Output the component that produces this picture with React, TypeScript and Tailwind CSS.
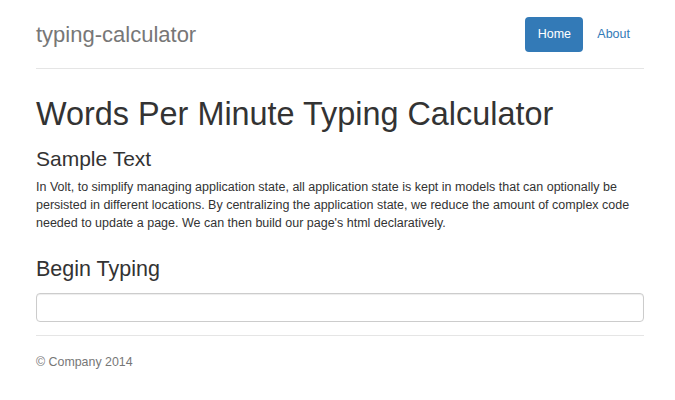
import React from "react";

export default function App() {
  return (
    <div className="min-h-[400px] bg-white pl-[36px] pr-[31px] text-[#333]" style={{ fontFamily: '"Liberation Sans", Arial, sans-serif' }}>
      <div className="flex items-center justify-between border-b border-[#e5e5e5] pt-[17px] pb-[16px]">
        <div className="text-[22px] leading-[26px] text-[#777]">typing-calculator</div>
        <div className="flex items-center mr-[14px]">
          <a className="flex h-[35px] w-[58px] items-center justify-center rounded-[4px] bg-[#337ab7] text-[12.5px] text-white">Home</a>
          <a className="ml-[14px] text-[12.5px] text-[#337ab7]">About</a>
        </div>
      </div>
      <h1 className="mt-[27px] text-[32.4px] leading-[36px]">Words Per Minute Typing Calculator</h1>
      <h3 className="mt-[15px] text-[21px] leading-[24px]">Sample Text</h3>
      <p className="mt-[7px] text-[12.5px] leading-[18px]">
        In Volt, to simplify managing application state, all application state is kept in models that can optionally be persisted in different locations. By centralizing the application state, we reduce the amount of complex code needed to update a page. We can then build our page's html declaratively.
      </p>
      <h3 className="mt-[25px] text-[21.5px] leading-[24px]">Begin Typing</h3>
      <input className="mt-[12px] block h-[29px] w-full rounded-[4px] border border-[#ccc] shadow-[inset_0_1px_1px_rgba(0,0,0,0.075)]" />
      <div className="mt-[13px] border-t border-[#e5e5e5] pt-[17px] text-[12.4px] leading-[18px] text-[#777]">© Company 2014</div>
    </div>
  );
}
